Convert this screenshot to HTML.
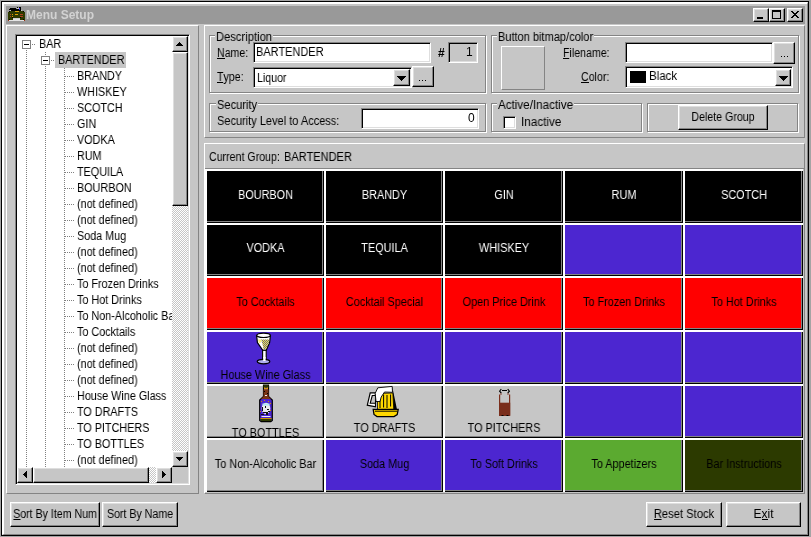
<!DOCTYPE html>
<html><head><meta charset="utf-8">
<style>
*{margin:0;padding:0;box-sizing:border-box}
html,body{width:811px;height:537px;overflow:hidden;background:#a4a4a4}
body{position:relative;font-family:"Liberation Sans",sans-serif;font-size:11px;color:#000;-webkit-font-smoothing:antialiased}
.t,.lbl,.ct{will-change:transform}
.a{position:absolute}
.t{position:absolute;white-space:nowrap;font-size:12px;line-height:13px;transform:scaleX(.885);transform-origin:0 0}
.btn{position:absolute;background:#c6c6c6;border:1px solid;border-color:#fff #000 #000 #fff;box-shadow:inset -1px -1px #848484,inset 1px 1px #dedede}
.sunk{position:absolute;background:#fff;border:1px solid;border-color:#848484 #fff #fff #848484;box-shadow:inset 1px 1px #000,inset -1px -1px #dedede}
.raise{position:absolute;border:1px solid;border-color:#fff #848484 #848484 #fff}
.etch{position:absolute;border:1px solid #848484;box-shadow:inset 1px 1px #fff,1px 1px #fff}
.lbl{position:absolute;white-space:nowrap;background:#c6c6c6;padding:0 1px;font-size:12px;line-height:13px;transform:scaleX(.885);transform-origin:0 0}
u{text-decoration:none;border-bottom:1px solid #000;line-height:10px;display:inline-block}
.dith{background-color:#fff;background-image:linear-gradient(45deg,#c6c6c6 25%,transparent 25%,transparent 75%,#c6c6c6 75%),linear-gradient(45deg,#c6c6c6 25%,transparent 25%,transparent 75%,#c6c6c6 75%);background-size:2px 2px;background-position:0 0,1px 1px}
.cell{position:absolute;border-style:solid;border-width:2px 0 0 2px;border-color:#fff;overflow:hidden}
.cell .in{position:absolute;left:0;top:0;right:0;bottom:0;border-right:1px solid #000;border-bottom:1px solid #000;box-shadow:inset -1px -1px #848484}
.ct{position:absolute;left:-20px;right:-20px;text-align:center;white-space:nowrap;font-size:12px;line-height:13px;transform:scaleX(.885);transform-origin:50% 0}
</style></head>
<body>
<!-- window frame -->
<div class="a" style="left:1px;top:1px;width:808px;height:535px;background:#000"></div>
<div class="a" style="left:2px;top:2px;width:806px;height:533px;background:#c6c6c6;border-top:2px solid #fff;border-left:2px solid #fff;border-right:1px solid #848484;border-bottom:1px solid #848484"></div>

<!-- title bar -->
<div class="a" style="left:6px;top:6px;width:799px;height:18px;background:#999"></div>
<div class="t" style="left:26px;top:9px;font-weight:bold;font-size:12px;line-height:13px;color:#d2d2d2;transform:none">Menu Setup</div>
<div class="btn" style="left:753px;top:8px;width:16px;height:14px"><div class="a" style="left:3px;top:8px;width:6px;height:2px;background:#000"></div></div>
<div class="btn" style="left:769px;top:8px;width:16px;height:14px"><div class="a" style="left:2px;top:1px;width:9px;height:9px;border:1px solid #000;border-top-width:2px"></div></div>
<div class="btn" style="left:787px;top:8px;width:16px;height:14px"><svg class="a" style="left:3px;top:2px" width="8" height="7" shape-rendering="crispEdges" fill="#000"><rect x="0" y="0" width="1" height="1"/><rect x="1" y="0" width="1" height="1"/><rect x="6" y="0" width="1" height="1"/><rect x="7" y="0" width="1" height="1"/><rect x="1" y="1" width="1" height="1"/><rect x="2" y="1" width="1" height="1"/><rect x="5" y="1" width="1" height="1"/><rect x="6" y="1" width="1" height="1"/><rect x="2" y="2" width="1" height="1"/><rect x="3" y="2" width="1" height="1"/><rect x="4" y="2" width="1" height="1"/><rect x="5" y="2" width="1" height="1"/><rect x="3" y="3" width="1" height="1"/><rect x="4" y="3" width="1" height="1"/><rect x="2" y="4" width="1" height="1"/><rect x="3" y="4" width="1" height="1"/><rect x="4" y="4" width="1" height="1"/><rect x="5" y="4" width="1" height="1"/><rect x="1" y="5" width="1" height="1"/><rect x="2" y="5" width="1" height="1"/><rect x="5" y="5" width="1" height="1"/><rect x="6" y="5" width="1" height="1"/><rect x="0" y="6" width="1" height="1"/><rect x="1" y="6" width="1" height="1"/><rect x="6" y="6" width="1" height="1"/><rect x="7" y="6" width="1" height="1"/></svg></div>

<!-- left panel -->
<div class="raise" style="left:6px;top:25px;width:193px;height:469px"></div>

<!-- tree -->
<div class="sunk" style="left:15px;top:34px;width:175px;height:451px"></div>
<div class="a" style="left:17px;top:36px;width:155px;height:431px;overflow:hidden">
<div class="a" style="left:9px;top:14px;width:1px;height:440px;background-image:linear-gradient(#808080 50%,transparent 50%);background-size:1px 2px"></div>
<div class="a" style="left:28px;top:16px;width:1px;height:440px;background-image:linear-gradient(#808080 50%,transparent 50%);background-size:1px 2px"></div>
<div class="a" style="left:47px;top:32px;width:1px;height:420px;background-image:linear-gradient(#808080 50%,transparent 50%);background-size:1px 2px"></div>
<div class="a" style="left:5px;top:4px;width:9px;height:9px;background:#fff;border:1px solid #808080"><div class="a" style="left:1px;top:3px;width:5px;height:1px;background:#000"></div></div>
<div class="a" style="left:15px;top:8px;width:4px;height:1px;background-image:linear-gradient(90deg,#808080 50%,transparent 50%);background-size:2px 1px"></div>
<div class="t" style="left:21.5px;top:2px;transform:scaleX(.9)">BAR</div>
<div class="a" style="left:24px;top:20px;width:9px;height:9px;background:#fff;border:1px solid #808080"><div class="a" style="left:1px;top:3px;width:5px;height:1px;background:#000"></div></div>
<div class="a" style="left:34px;top:24px;width:4px;height:1px;background-image:linear-gradient(90deg,#808080 50%,transparent 50%);background-size:2px 1px"></div>
<div class="a" style="left:38px;top:16px;width:71px;height:16px;background:#c6c6c6"></div>
<div class="t" style="left:40.5px;top:18px;transform:scaleX(.9)">BARTENDER</div>
<div class="a" style="left:48px;top:40px;width:9px;height:1px;background-image:linear-gradient(90deg,#808080 50%,transparent 50%);background-size:2px 1px"></div>
<div class="t" style="left:59.5px;top:34px;transform:scaleX(.9)">BRANDY</div>
<div class="a" style="left:48px;top:56px;width:9px;height:1px;background-image:linear-gradient(90deg,#808080 50%,transparent 50%);background-size:2px 1px"></div>
<div class="t" style="left:59.5px;top:50px;transform:scaleX(.9)">WHISKEY</div>
<div class="a" style="left:48px;top:72px;width:9px;height:1px;background-image:linear-gradient(90deg,#808080 50%,transparent 50%);background-size:2px 1px"></div>
<div class="t" style="left:59.5px;top:66px;transform:scaleX(.9)">SCOTCH</div>
<div class="a" style="left:48px;top:88px;width:9px;height:1px;background-image:linear-gradient(90deg,#808080 50%,transparent 50%);background-size:2px 1px"></div>
<div class="t" style="left:59.5px;top:82px;transform:scaleX(.9)">GIN</div>
<div class="a" style="left:48px;top:104px;width:9px;height:1px;background-image:linear-gradient(90deg,#808080 50%,transparent 50%);background-size:2px 1px"></div>
<div class="t" style="left:59.5px;top:98px;transform:scaleX(.9)">VODKA</div>
<div class="a" style="left:48px;top:120px;width:9px;height:1px;background-image:linear-gradient(90deg,#808080 50%,transparent 50%);background-size:2px 1px"></div>
<div class="t" style="left:59.5px;top:114px;transform:scaleX(.9)">RUM</div>
<div class="a" style="left:48px;top:136px;width:9px;height:1px;background-image:linear-gradient(90deg,#808080 50%,transparent 50%);background-size:2px 1px"></div>
<div class="t" style="left:59.5px;top:130px;transform:scaleX(.9)">TEQUILA</div>
<div class="a" style="left:48px;top:152px;width:9px;height:1px;background-image:linear-gradient(90deg,#808080 50%,transparent 50%);background-size:2px 1px"></div>
<div class="t" style="left:59.5px;top:146px;transform:scaleX(.9)">BOURBON</div>
<div class="a" style="left:48px;top:168px;width:9px;height:1px;background-image:linear-gradient(90deg,#808080 50%,transparent 50%);background-size:2px 1px"></div>
<div class="t" style="left:59.5px;top:162px;transform:scaleX(.9)">(not defined)</div>
<div class="a" style="left:48px;top:184px;width:9px;height:1px;background-image:linear-gradient(90deg,#808080 50%,transparent 50%);background-size:2px 1px"></div>
<div class="t" style="left:59.5px;top:178px;transform:scaleX(.9)">(not defined)</div>
<div class="a" style="left:48px;top:200px;width:9px;height:1px;background-image:linear-gradient(90deg,#808080 50%,transparent 50%);background-size:2px 1px"></div>
<div class="t" style="left:59.5px;top:194px;transform:scaleX(.9)">Soda Mug</div>
<div class="a" style="left:48px;top:216px;width:9px;height:1px;background-image:linear-gradient(90deg,#808080 50%,transparent 50%);background-size:2px 1px"></div>
<div class="t" style="left:59.5px;top:210px;transform:scaleX(.9)">(not defined)</div>
<div class="a" style="left:48px;top:232px;width:9px;height:1px;background-image:linear-gradient(90deg,#808080 50%,transparent 50%);background-size:2px 1px"></div>
<div class="t" style="left:59.5px;top:226px;transform:scaleX(.9)">(not defined)</div>
<div class="a" style="left:48px;top:248px;width:9px;height:1px;background-image:linear-gradient(90deg,#808080 50%,transparent 50%);background-size:2px 1px"></div>
<div class="t" style="left:59.5px;top:242px;transform:scaleX(.9)">To Frozen Drinks</div>
<div class="a" style="left:48px;top:264px;width:9px;height:1px;background-image:linear-gradient(90deg,#808080 50%,transparent 50%);background-size:2px 1px"></div>
<div class="t" style="left:59.5px;top:258px;transform:scaleX(.9)">To Hot Drinks</div>
<div class="a" style="left:48px;top:280px;width:9px;height:1px;background-image:linear-gradient(90deg,#808080 50%,transparent 50%);background-size:2px 1px"></div>
<div class="t" style="left:59.5px;top:274px;transform:scaleX(.9)">To Non-Alcoholic Bar</div>
<div class="a" style="left:48px;top:296px;width:9px;height:1px;background-image:linear-gradient(90deg,#808080 50%,transparent 50%);background-size:2px 1px"></div>
<div class="t" style="left:59.5px;top:290px;transform:scaleX(.9)">To Cocktails</div>
<div class="a" style="left:48px;top:312px;width:9px;height:1px;background-image:linear-gradient(90deg,#808080 50%,transparent 50%);background-size:2px 1px"></div>
<div class="t" style="left:59.5px;top:306px;transform:scaleX(.9)">(not defined)</div>
<div class="a" style="left:48px;top:328px;width:9px;height:1px;background-image:linear-gradient(90deg,#808080 50%,transparent 50%);background-size:2px 1px"></div>
<div class="t" style="left:59.5px;top:322px;transform:scaleX(.9)">(not defined)</div>
<div class="a" style="left:48px;top:344px;width:9px;height:1px;background-image:linear-gradient(90deg,#808080 50%,transparent 50%);background-size:2px 1px"></div>
<div class="t" style="left:59.5px;top:338px;transform:scaleX(.9)">(not defined)</div>
<div class="a" style="left:48px;top:360px;width:9px;height:1px;background-image:linear-gradient(90deg,#808080 50%,transparent 50%);background-size:2px 1px"></div>
<div class="t" style="left:59.5px;top:354px;transform:scaleX(.9)">House Wine Glass</div>
<div class="a" style="left:48px;top:376px;width:9px;height:1px;background-image:linear-gradient(90deg,#808080 50%,transparent 50%);background-size:2px 1px"></div>
<div class="t" style="left:59.5px;top:370px;transform:scaleX(.9)">TO DRAFTS</div>
<div class="a" style="left:48px;top:392px;width:9px;height:1px;background-image:linear-gradient(90deg,#808080 50%,transparent 50%);background-size:2px 1px"></div>
<div class="t" style="left:59.5px;top:386px;transform:scaleX(.9)">TO PITCHERS</div>
<div class="a" style="left:48px;top:408px;width:9px;height:1px;background-image:linear-gradient(90deg,#808080 50%,transparent 50%);background-size:2px 1px"></div>
<div class="t" style="left:59.5px;top:402px;transform:scaleX(.9)">TO BOTTLES</div>
<div class="a" style="left:48px;top:424px;width:9px;height:1px;background-image:linear-gradient(90deg,#808080 50%,transparent 50%);background-size:2px 1px"></div>
<div class="t" style="left:59.5px;top:418px;transform:scaleX(.9)">(not defined)</div>
</div>
<div class="a dith" style="left:172px;top:36px;width:16px;height:431px"></div>
<div class="btn" style="left:172px;top:36px;width:16px;height:16px"><svg class="a" style="left:3px;top:5px" width="7" height="4"><path d="M3 0h1v1h1v1h1v1h1v1H0V3h1V2h1V1h1z" fill="#000"/></svg></div>
<div class="btn" style="left:172px;top:52px;width:16px;height:154px"></div>
<div class="btn" style="left:172px;top:451px;width:16px;height:16px"><svg class="a" style="left:3px;top:5px" width="7" height="4"><path d="M0 0h7v1H6v1H5v1H4v1H3V3H2V2H1V1H0z" fill="#000"/></svg></div>
<div class="a dith" style="left:17px;top:467px;width:155px;height:16px"></div>
<div class="btn" style="left:17px;top:467px;width:16px;height:16px"><svg class="a" style="left:5px;top:3px" width="4" height="7"><path d="M3 0h1v7H3V6H2V5H1V4H0V3h1V2h1V1h1z" fill="#000"/></svg></div>
<div class="btn" style="left:33px;top:467px;width:116px;height:16px"></div>
<div class="btn" style="left:156px;top:467px;width:16px;height:16px"><svg class="a" style="left:5px;top:3px" width="4" height="7"><path d="M0 0h1v1h1v1h1v1h1v1H3v1H2v1H1v1H0z" fill="#000"/></svg></div>
<div class="a" style="left:172px;top:467px;width:16px;height:16px;background:#c6c6c6"></div>

<!-- right upper panel -->
<div class="raise" style="left:204px;top:25px;width:601px;height:113px"></div>
<!-- description group -->
<div class="etch" style="left:209px;top:35px;width:277px;height:58px"></div>
<div class="lbl" style="left:215px;top:31px;transform:scaleX(.935)">Description</div>
<div class="t" style="left:217px;top:47px"><u>N</u>ame:</div>
<div class="sunk" style="left:253px;top:42px;width:178px;height:21px"><div class="t" style="left:2px;top:3px;transform:scaleX(.916)">BARTENDER</div></div>
<div class="t" style="left:438px;top:47px;font-weight:bold;transform:none">#</div>
<div class="sunk" style="left:448px;top:42px;width:30px;height:21px;background:#c6c6c6"><div class="t" style="left:17px;top:3px;transform:none">1</div></div>
<div class="t" style="left:217px;top:71px"><u>T</u>ype:</div>
<div class="sunk" style="left:253px;top:67px;width:159px;height:21px"><div class="t" style="left:3px;top:4px">Liquor</div>
<div class="btn" style="left:139px;top:1px;width:17px;height:17px"><svg class="a" style="left:3px;top:6px" width="9" height="5"><path d="M0 0h9v1H8v1H7v1H6v1H5v1H4V4H3V3H2V2H1V1H0z" fill="#000"/></svg></div></div>
<div class="btn" style="left:412px;top:66px;width:22px;height:21px"><svg class="a" style="left:6px;top:13px" width="8" height="2" fill="#000" shape-rendering="crispEdges"><rect x="0" y="0" width="1" height="1"/><rect x="3" y="0" width="1" height="1"/><rect x="6" y="0" width="1" height="1"/></svg></div>

<!-- button bitmap/color group -->
<div class="etch" style="left:491px;top:35px;width:308px;height:58px"></div>
<div class="lbl" style="left:497px;top:31px;transform:scaleX(.92)">Button bitmap/color</div>
<div class="raise" style="left:501px;top:46px;width:44px;height:44px"></div>
<div class="t" style="left:563px;top:47px"><u>F</u>ilename:</div>
<div class="sunk" style="left:625px;top:42px;width:148px;height:21px"></div>
<div class="btn" style="left:773px;top:42px;width:22px;height:22px"><svg class="a" style="left:7px;top:13px" width="8" height="2" fill="#000" shape-rendering="crispEdges"><rect x="0" y="0" width="1" height="1"/><rect x="3" y="0" width="1" height="1"/><rect x="6" y="0" width="1" height="1"/></svg></div>
<div class="t" style="left:581px;top:71px"><u>C</u>olor:</div>
<div class="sunk" style="left:625px;top:66px;width:168px;height:22px">
<div class="a" style="left:4px;top:4px;width:16px;height:12px;background:#000"></div>
<div class="t" style="left:23px;top:3px;transform:scaleX(.96)">Black</div>
<div class="btn" style="left:149px;top:2px;width:16px;height:17px"><svg class="a" style="left:3px;top:6px" width="9" height="5"><path d="M0 0h9v1H8v1H7v1H6v1H5v1H4V4H3V3H2V2H1V1H0z" fill="#000"/></svg></div></div>

<!-- security group -->
<div class="etch" style="left:209px;top:103px;width:277px;height:29px"></div>
<div class="lbl" style="left:216px;top:99px;transform:scaleX(.927)">Security</div>
<div class="t" style="left:217px;top:115px;transform:scaleX(.917)">Security Level to Access:</div>
<div class="sunk" style="left:361px;top:108px;width:118px;height:21px"><div class="t" style="left:106px;top:3px;transform:none">0</div></div>

<!-- active/inactive group -->
<div class="etch" style="left:491px;top:103px;width:151px;height:29px"></div>
<div class="lbl" style="left:497px;top:99px;transform:scaleX(.97)">Active/Inactive</div>
<div class="sunk" style="left:503px;top:116px;width:13px;height:13px"></div>
<div class="t" style="left:520.5px;top:116px;transform:scaleX(.975)">Inactive</div>

<!-- delete group -->
<div class="etch" style="left:647px;top:103px;width:151px;height:29px"></div>
<div class="btn" style="left:678px;top:105px;width:90px;height:25px"><div class="ct" style="top:5px">Delete Group</div></div>

<!-- right lower panel -->
<div class="raise" style="left:204px;top:143px;width:601px;height:351px"></div>
<div class="a" style="left:205px;top:168px;width:599px;height:1px;background:#848484"></div>
<div class="t" style="left:209px;top:151px">Current Group:</div><div class="t" style="left:284px;top:151px;transform:scaleX(.92)">BARTENDER</div>

<!-- grid -->
<div class="cell" style="left:205px;top:169px;width:119px;height:54px;background:#000"><div class="in"></div><div class="ct" style="top:18px;color:#fff;transform:scaleX(.905)">BOURBON</div></div>
<div class="cell" style="left:324px;top:169px;width:119px;height:54px;background:#000"><div class="in"></div><div class="ct" style="top:18px;color:#fff;transform:scaleX(.905)">BRANDY</div></div>
<div class="cell" style="left:443px;top:169px;width:120px;height:54px;background:#000"><div class="in"></div><div class="ct" style="top:18px;color:#fff;transform:scaleX(.905)">GIN</div></div>
<div class="cell" style="left:563px;top:169px;width:120px;height:54px;background:#000"><div class="in"></div><div class="ct" style="top:18px;color:#fff;transform:scaleX(.905)">RUM</div></div>
<div class="cell" style="left:683px;top:169px;width:120px;height:54px;background:#000"><div class="in"></div><div class="ct" style="top:18px;color:#fff;transform:scaleX(.905)">SCOTCH</div></div>
<div class="cell" style="left:205px;top:223px;width:119px;height:53px;background:#000"><div class="in"></div><div class="ct" style="top:17px;color:#fff;transform:scaleX(.905)">VODKA</div></div>
<div class="cell" style="left:324px;top:223px;width:119px;height:53px;background:#000"><div class="in"></div><div class="ct" style="top:17px;color:#fff;transform:scaleX(.905)">TEQUILA</div></div>
<div class="cell" style="left:443px;top:223px;width:120px;height:53px;background:#000"><div class="in"></div><div class="ct" style="top:17px;color:#fff;transform:scaleX(.905)">WHISKEY</div></div>
<div class="cell" style="left:563px;top:223px;width:120px;height:53px;background:#4c26d0"><div class="in"></div></div>
<div class="cell" style="left:683px;top:223px;width:120px;height:53px;background:#4c26d0"><div class="in"></div></div>
<div class="cell" style="left:205px;top:276px;width:119px;height:54px;background:#ff0000"><div class="in"></div><div class="ct" style="top:18px;color:#000;transform:scaleX(.905)">To Cocktails</div></div>
<div class="cell" style="left:324px;top:276px;width:119px;height:54px;background:#ff0000"><div class="in"></div><div class="ct" style="top:18px;color:#000;transform:scaleX(.905)">Cocktail Special</div></div>
<div class="cell" style="left:443px;top:276px;width:120px;height:54px;background:#ff0000"><div class="in"></div><div class="ct" style="top:18px;color:#000;transform:scaleX(.905)">Open Price Drink</div></div>
<div class="cell" style="left:563px;top:276px;width:120px;height:54px;background:#ff0000"><div class="in"></div><div class="ct" style="top:18px;color:#000;transform:scaleX(.905)">To Frozen Drinks</div></div>
<div class="cell" style="left:683px;top:276px;width:120px;height:54px;background:#ff0000"><div class="in"></div><div class="ct" style="top:18px;color:#000;transform:scaleX(.905)">To Hot Drinks</div></div>
<div class="cell" style="left:205px;top:330px;width:119px;height:54px;background:#4c26d0"><div class="in"></div><div class="ct" style="top:37px;color:#000;transform:scaleX(.905)">House Wine Glass</div></div>
<div class="cell" style="left:324px;top:330px;width:119px;height:54px;background:#4c26d0"><div class="in"></div></div>
<div class="cell" style="left:443px;top:330px;width:120px;height:54px;background:#4c26d0"><div class="in"></div></div>
<div class="cell" style="left:563px;top:330px;width:120px;height:54px;background:#4c26d0"><div class="in"></div></div>
<div class="cell" style="left:683px;top:330px;width:120px;height:54px;background:#4c26d0"><div class="in"></div></div>
<div class="cell" style="left:205px;top:384px;width:119px;height:54px;background:#c6c6c6"><div class="in"></div><div class="ct" style="top:41px;color:#000;transform:scaleX(.905)">TO BOTTLES</div></div>
<div class="cell" style="left:324px;top:384px;width:119px;height:54px;background:#c6c6c6"><div class="in"></div><div class="ct" style="top:36px;color:#000;transform:scaleX(.905)">TO DRAFTS</div></div>
<div class="cell" style="left:443px;top:384px;width:120px;height:54px;background:#c6c6c6"><div class="in"></div><div class="ct" style="top:36px;color:#000;transform:scaleX(.905)">TO PITCHERS</div></div>
<div class="cell" style="left:563px;top:384px;width:120px;height:54px;background:#4c26d0"><div class="in"></div></div>
<div class="cell" style="left:683px;top:384px;width:120px;height:54px;background:#4c26d0"><div class="in"></div></div>
<div class="cell" style="left:205px;top:438px;width:119px;height:54px;background:#c6c6c6"><div class="in"></div><div class="ct" style="top:18px;color:#000;transform:scaleX(.905)">To Non-Alcoholic Bar</div></div>
<div class="cell" style="left:324px;top:438px;width:119px;height:54px;background:#4c26d0"><div class="in"></div><div class="ct" style="top:18px;color:#000;transform:scaleX(.905)">Soda Mug</div></div>
<div class="cell" style="left:443px;top:438px;width:120px;height:54px;background:#4c26d0"><div class="in"></div><div class="ct" style="top:18px;color:#000;transform:scaleX(.905)">To Soft Drinks</div></div>
<div class="cell" style="left:563px;top:438px;width:120px;height:54px;background:#5baa30"><div class="in"></div><div class="ct" style="top:18px;color:#000;transform:scaleX(.905)">To Appetizers</div></div>
<div class="cell" style="left:683px;top:438px;width:120px;height:54px;background:#2c3a00"><div class="in"></div><div class="ct" style="top:18px;color:#000;transform:scaleX(.905)">Bar Instructions</div></div>

<!-- icons -->
<svg class="a" style="left:8px;top:7px" width="17" height="15" viewBox="0 0 17 15" shape-rendering="crispEdges">
<rect x="0" y="11" width="17" height="3" fill="#e4e4e4"/>
<rect x="2" y="1" width="6" height="2" fill="#000"/><rect x="1" y="2" width="1" height="1" fill="#000"/>
<rect x="8" y="2" width="3" height="1" fill="#000"/><rect x="9" y="1" width="2" height="1" fill="#c8c8c8"/>
<rect x="9" y="0" width="1" height="1" fill="#000"/><rect x="11" y="0" width="2" height="3" fill="#000"/><rect x="3" y="3" width="10" height="1" fill="#000"/><rect x="2" y="3" width="1" height="1" fill="#c8c8c8"/><rect x="13" y="3" width="1" height="1" fill="#c8c8c8"/><rect x="11" y="1" width="1" height="2" fill="#3838e0"/>
<g transform="translate(0,1)">
<rect x="1" y="3" width="15" height="1" fill="#2e3a00"/>
<rect x="0" y="4" width="17" height="6" fill="#2e3a00"/>
<rect x="0" y="10" width="5" height="2" fill="#2e3a00"/><rect x="12" y="10" width="5" height="2" fill="#2e3a00"/>
<rect x="5" y="10" width="7" height="1" fill="#d0d0d0"/>
<rect x="1" y="3" width="1" height="1" fill="#000"/><rect x="15" y="3" width="1" height="1" fill="#000"/>
<rect x="1" y="11" width="1" height="1" fill="#000"/><rect x="15" y="11" width="1" height="1" fill="#000"/>
<rect x="4" y="9" width="1" height="1" fill="#000"/><rect x="12" y="9" width="1" height="1" fill="#000"/>
<rect x="0" y="12" width="1" height="1" fill="#a03010"/><rect x="16" y="12" width="1" height="1" fill="#a03010"/>
<rect x="7" y="3" width="4" height="1" fill="#d8a000"/>
<rect x="2" y="6" width="1" height="1" fill="#b04020"/><rect x="2" y="8" width="1" height="1" fill="#b04020"/>
<rect x="4" y="6" width="1" height="1" fill="#e0a000"/><rect x="4" y="8" width="1" height="1" fill="#e0a000"/>
<rect x="7" y="6" width="3" height="1" fill="#e0a000"/>
<rect x="12" y="6" width="3" height="1" fill="#b04020"/><rect x="12" y="8" width="3" height="1" fill="#b04020"/>
</g>
</svg>

<svg class="a" style="left:254px;top:332px" width="20" height="34" viewBox="0 0 20 34">
<defs><pattern id="dy" width="2" height="2" patternUnits="userSpaceOnUse"><rect width="2" height="2" fill="#f4f040"/><rect width="1" height="1" fill="#6a6090"/><rect x="1" y="1" width="1" height="1" fill="#6a6090"/></pattern></defs>
<polygon points="2.6,3.6 16.4,3.6 15.6,10.5 12.2,18.3 8.8,18.3 3.4,10.5" fill="#fff" stroke="#000" stroke-width="1.2"/>
<polygon points="7,7.5 15.4,7.5 14.8,11 12,17 9.5,17 8.5,12" fill="url(#dy)"/>
<polygon points="4,7.5 7,7.5 6.5,11 5,11" fill="#f8f070"/>
<ellipse cx="9.5" cy="3.3" rx="6.8" ry="2.2" fill="#fff" stroke="#000" stroke-width="1.2"/>
<rect x="8.6" y="18.3" width="3.6" height="9" fill="#fff" stroke="#000" stroke-width="1.1"/>
<ellipse cx="9.5" cy="29.6" rx="6.3" ry="2.2" fill="#b0b0f0" stroke="#000" stroke-width="1.2"/>
<rect x="9.2" y="25" width="2.4" height="4" fill="#fff"/>
</svg>

<svg class="a" style="left:258px;top:384px" width="16" height="39" viewBox="0 0 16 39">
<path d="M5.5 1.2h5v11.3l3.8 3.5v20.5l-1.5 1.2H3.2L1.7 36.5V16l3.8-3.5z" fill="#4c26d0" stroke="#000" stroke-width="1.2"/>
<rect x="5.5" y="1.2" width="5" height="2.5" fill="#2e3a00"/>
<path d="M6 3.5h1l1 1 1-1h1v2H6z" fill="#e0a000"/>
<path d="M5.5 5.5h5v7l2.5 2.5H3l2.5-2.5z" fill="#7a3414"/>
<path d="M6 7h1v1H6zM9 9h1v1H9z" fill="#000"/>
<rect x="7" y="11" width="2" height="1" fill="#f0f0f0"/>
<ellipse cx="8" cy="24.5" rx="4.3" ry="5.8" fill="#e8e8f0"/>
<rect x="4.5" y="19.5" width="7" height="2" fill="#b0e8f0"/>
<path d="M4 23h1v4H4zM7 22h1v2H7zM9 25h2v1H9zM5 28h5v1H5zM3 30h3v1H3zM8 29h2v2H8zM10 27h2v1h-2z" fill="#101010"/>
<rect x="3.5" y="32" width="9" height="1" fill="#f0f0f0"/>
<rect x="2.5" y="34" width="11" height="1" fill="#d09000"/>
<rect x="2.5" y="35" width="11" height="2" fill="#2e3a00"/>
<path d="M3 17h1v1H3zM12 19h1v1h-1zM2 27h1v1H2zM12 26h1v1h-1zM6 16h1v1H6zM10 17h1v1h-1z" fill="#d09000"/>
</svg>

<svg class="a" style="left:364px;top:383px" width="38" height="37" viewBox="0 0 38 37">
<polygon points="6.2,9.8 3.3,22.2 11.5,23.8 11.5,9.8" fill="#fff" stroke="#000" stroke-width="1.2"/>
<polygon points="8.3,12.5 6.2,20.3 11.5,20.3 11.5,12.5" fill="#c6c6c6" stroke="#000" stroke-width="1.1"/>
<polygon points="28.2,3.4 33.2,27.5 28.5,27.5 28.5,9" fill="#000"/>
<polygon points="13.5,10.5 28.8,10 29.8,26.5 13.5,26.5" fill="#ffd800" stroke="#000" stroke-width="0.8"/>
<path d="M16 13v12M19.6 11.5v13M23 12v13M26.6 11.5v12" stroke="#000" stroke-width="1"/>
<polygon points="13.8,4.8 28.2,3.4 28.5,9.3 20.5,9 17.2,14 16,18.5 12,18.5 11.2,10.3" fill="#fff" stroke="#000" stroke-width="0.9"/>
<polygon points="9.2,26.3 34.2,26.3 33.2,31.5 30,33.6 13,33.6 10,31.5" fill="#ffd800" stroke="#000" stroke-width="1.3"/>
<path d="M11 28.2h22" stroke="#000" stroke-width="1"/>
</svg>

<svg class="a" style="left:497px;top:388px" width="15" height="30" viewBox="0 0 15 30">
<path d="M5 2.5h5" stroke="#000" stroke-width="1"/>
<path d="M4.3 1L2.6 3.2L4.3 5M10.7 1L12.4 3.2L10.7 5" stroke="#000" stroke-width="1.1" fill="none"/>
<path d="M4 5.3v1.5M11 5.3v1.5" stroke="#7a2e1c" stroke-width="1.1"/>
<path d="M2.6 6.5v20.8h10V6.5" fill="none" stroke="#7a2e1c" stroke-width="1.2"/>
<rect x="2" y="14.7" width="11.2" height="12.8" fill="#7a2e1c"/>
<rect x="4.5" y="27" width="2" height="1" fill="#000"/><rect x="9.5" y="27" width="2" height="1" fill="#000"/>
</svg>

<!-- bottom buttons -->
<div class="btn" style="left:10px;top:502px;width:90px;height:25px"><div class="ct" style="top:5px"><u>S</u>ort By Item Num</div></div>
<div class="btn" style="left:102px;top:502px;width:76px;height:25px"><div class="ct" style="top:5px">Sort By Name</div></div>
<div class="btn" style="left:646px;top:502px;width:76px;height:25px"><div class="ct" style="top:5px;transform:scaleX(.936)"><u>R</u>eset Stock</div></div>
<div class="btn" style="left:726px;top:502px;width:75px;height:25px"><div class="ct" style="top:5px;transform:none">E<u>x</u>it</div></div>

</body></html>
